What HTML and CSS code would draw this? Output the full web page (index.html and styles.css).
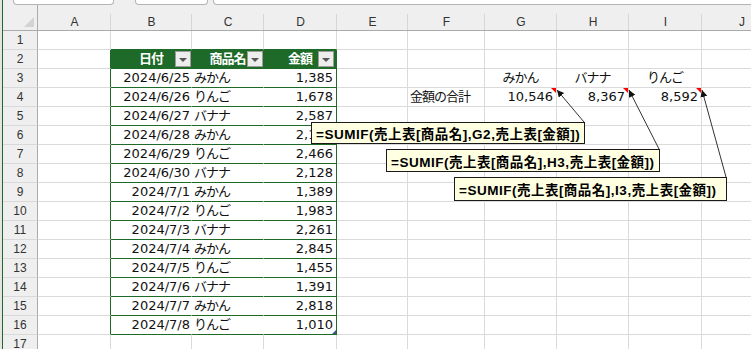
FILE: index.html
```html
<!DOCTYPE html>
<html lang="ja">
<head>
<meta charset="utf-8">
<title>SUMIF</title>
<link rel="stylesheet" href="styles.css">
</head>
<body>
<div class="app">
  <div class="edge"></div>
  <div class="gline"></div>
  <div class="main">
    <div class="tabs">
      <div class="tab tab1"></div>
      <div class="tab tab2"></div>
      <div class="tab tab3"></div>
    </div>
    <div class="sheet">
      <div class="corner"><svg width="10" height="10" viewBox="0 0 10 10"><polygon points="10,0 10,10 0,10" fill="#d3d3d3"/></svg></div>
      <div class="ch">A</div><div class="ch">B</div><div class="ch">C</div><div class="ch">D</div><div class="ch">E</div><div class="ch">F</div><div class="ch">G</div><div class="ch">H</div><div class="ch">I</div><div class="ch">J</div>

      <div class="rh">1</div>
      <div class="c"></div><div class="c tt"></div><div class="c tt"></div><div class="c tt"></div><div class="c"></div><div class="c"></div><div class="c"></div><div class="c"></div><div class="c"></div><div class="c"></div>

      <div class="rh">2</div>
      <div class="c tl"></div>
      <div class="c th"><span class="jp">日付</span><span class="fb"><span class="tri"></span></span></div>
      <div class="c th"><span class="jp">商品名</span><span class="fb"><span class="tri"></span></span></div>
      <div class="c th te"><span class="jp">金額</span><span class="fb fb-d"><span class="tri"></span></span></div>
      <div class="c"></div><div class="c"></div><div class="c"></div><div class="c"></div><div class="c"></div><div class="c"></div>

      <div class="rh">3</div>
      <div class="c tl"></div><div class="c t r">2024/6/25</div><div class="c t jp">みかん</div><div class="c t r te">1,385</div>
      <div class="c"></div><div class="c"></div><div class="c ctr jp">みかん</div><div class="c ctr jp">バナナ</div><div class="c ctr jp">りんご</div><div class="c"></div>

      <div class="rh">4</div>
      <div class="c tl"></div><div class="c t r">2024/6/26</div><div class="c t jp">りんご</div><div class="c t r te">1,678</div>
      <div class="c"></div><div class="c lbl jp">金額の合計</div><div class="c r sum">10,546</div><div class="c r sum">8,367</div><div class="c r sum">8,592</div><div class="c"></div>

      <div class="rh">5</div>
      <div class="c tl"></div><div class="c t r">2024/6/27</div><div class="c t jp">バナナ</div><div class="c t r te">2,587</div>
      <div class="c"></div><div class="c"></div><div class="c"></div><div class="c"></div><div class="c"></div><div class="c"></div>

      <div class="rh">6</div>
      <div class="c tl"></div><div class="c t r">2024/6/28</div><div class="c t jp">みかん</div><div class="c t r te">2,109</div>
      <div class="c"></div><div class="c"></div><div class="c"></div><div class="c"></div><div class="c"></div><div class="c"></div>

      <div class="rh">7</div>
      <div class="c tl"></div><div class="c t r">2024/6/29</div><div class="c t jp">りんご</div><div class="c t r te">2,466</div>
      <div class="c"></div><div class="c"></div><div class="c"></div><div class="c"></div><div class="c"></div><div class="c"></div>

      <div class="rh">8</div>
      <div class="c tl"></div><div class="c t r">2024/6/30</div><div class="c t jp">バナナ</div><div class="c t r te">2,128</div>
      <div class="c"></div><div class="c"></div><div class="c"></div><div class="c"></div><div class="c"></div><div class="c"></div>

      <div class="rh">9</div>
      <div class="c tl"></div><div class="c t r">2024/7/1</div><div class="c t jp">みかん</div><div class="c t r te">1,389</div>
      <div class="c"></div><div class="c"></div><div class="c"></div><div class="c"></div><div class="c"></div><div class="c"></div>

      <div class="rh">10</div>
      <div class="c tl"></div><div class="c t r">2024/7/2</div><div class="c t jp">りんご</div><div class="c t r te">1,983</div>
      <div class="c"></div><div class="c"></div><div class="c"></div><div class="c"></div><div class="c"></div><div class="c"></div>

      <div class="rh">11</div>
      <div class="c tl"></div><div class="c t r">2024/7/3</div><div class="c t jp">バナナ</div><div class="c t r te">2,261</div>
      <div class="c"></div><div class="c"></div><div class="c"></div><div class="c"></div><div class="c"></div><div class="c"></div>

      <div class="rh">12</div>
      <div class="c tl"></div><div class="c t r">2024/7/4</div><div class="c t jp">みかん</div><div class="c t r te">2,845</div>
      <div class="c"></div><div class="c"></div><div class="c"></div><div class="c"></div><div class="c"></div><div class="c"></div>

      <div class="rh">13</div>
      <div class="c tl"></div><div class="c t r">2024/7/5</div><div class="c t jp">りんご</div><div class="c t r te">1,455</div>
      <div class="c"></div><div class="c"></div><div class="c"></div><div class="c"></div><div class="c"></div><div class="c"></div>

      <div class="rh">14</div>
      <div class="c tl"></div><div class="c t r">2024/7/6</div><div class="c t jp">バナナ</div><div class="c t r te">1,391</div>
      <div class="c"></div><div class="c"></div><div class="c"></div><div class="c"></div><div class="c"></div><div class="c"></div>

      <div class="rh">15</div>
      <div class="c tl"></div><div class="c t r">2024/7/7</div><div class="c t jp">みかん</div><div class="c t r te">2,818</div>
      <div class="c"></div><div class="c"></div><div class="c"></div><div class="c"></div><div class="c"></div><div class="c"></div>

      <div class="rh">16</div>
      <div class="c tl"></div><div class="c t r">2024/7/8</div><div class="c t jp">りんご</div><div class="c t r te">1,010</div>
      <div class="c"></div><div class="c"></div><div class="c"></div><div class="c"></div><div class="c"></div><div class="c"></div>

      <div class="rh">17</div>
      <div class="c"></div><div class="c"></div><div class="c"></div><div class="c"></div><div class="c"></div><div class="c"></div><div class="c"></div><div class="c"></div><div class="c"></div><div class="c"></div>
    </div>
  </div>

  <svg class="arrows" width="751" height="349" viewBox="0 0 751 349">
    <defs>
      <marker id="ah" markerUnits="userSpaceOnUse" markerWidth="8" markerHeight="8" refX="7" refY="3.5" orient="auto">
        <path d="M0,0 L7,3.5 L0,7 z" fill="#111"/>
      </marker>
    </defs>
    <polygon points="551,88 556,88 556,93" fill="#ff0000"/>
    <polygon points="623,88 628,88 628,93" fill="#ff0000"/>
    <polygon points="696,88 701,88 701,93" fill="#ff0000"/>
    <line x1="584" y1="122" x2="557" y2="90" stroke="#333" stroke-width="1" marker-end="url(#ah)"/>
    <line x1="659" y1="149" x2="629" y2="90" stroke="#333" stroke-width="1" marker-end="url(#ah)"/>
    <line x1="726" y1="177" x2="702" y2="90" stroke="#333" stroke-width="1" marker-end="url(#ah)"/>
    <polygon points="336,330 336,334 332,334" fill="#3b5a8a"/>
  </svg>

  <div class="cm cm1">=SUMIF(売上表[商品名],G2,売上表[金額])</div>
  <div class="cm cm2">=SUMIF(売上表[商品名],H3,売上表[金額])</div>
  <div class="cm cm3">=SUMIF(売上表[商品名],I3,売上表[金額])</div>
</div>
</body>
</html>
```

FILE: styles.css
```css
html, body {
  margin: 0;
  padding: 0;
  background: #ffffff;
  overflow: hidden;
}

.app {
  position: relative;
  display: flex;
  width: 751px;
  height: 349px;
  overflow: hidden;
}

.edge {
  width: 2px;
  background: #e4e4e4;
  flex: none;
}

.gline {
  width: 1px;
  background: #1e6a28;
  flex: none;
}

.main {
  flex: 1;
  display: flex;
  flex-direction: column;
  min-width: 0;
}

.tabs {
  height: 5px;
  display: flex;
  background: #efefef;
  flex: none;
}

.tab {
  height: 5px;
  box-sizing: border-box;
  background: #ffffff;
  border: 1px solid #b4b4b4;
  border-top: none;
  border-radius: 0 0 4px 4px;
}

.tab1 { margin-left: 10px; width: 101px; }
.tab2 { margin-left: 21px; width: 73px; }
.tab3 { margin-left: 5px; flex: 1; margin-right: -10px; }

.sheet {
  display: grid;
  grid-template-columns: 35px 73px 81px 72px 73px 71px 77px 72px 72px 73px 80px;
  grid-template-rows: 26px;
  grid-auto-rows: 19px;
}

.corner {
  background: #efefef;
  border-right: 1px solid #ababab;
  border-bottom: 1px solid #ababab;
  display: flex;
  justify-content: flex-end;
  align-items: flex-end;
  padding: 0 3px 3px 0;
}

.ch {
  position: relative;
  background: #efefef;
  border-bottom: 1px solid #ababab;
  text-align: center;
  font: 12px/16px "Liberation Sans", "DejaVu Sans", sans-serif;
  color: #333333;
  padding-top: 9px;
}

.ch::after {
  content: "";
  position: absolute;
  right: 0;
  top: 9px;
  bottom: 0;
  width: 1px;
  background: #d6d6d6;
}

.rh {
  background: #efefef;
  border-right: 1px solid #ababab;
  border-bottom: 1px solid #d9d9d9;
  text-align: center;
  font: 12px/18px "Liberation Sans", "DejaVu Sans", sans-serif;
  color: #333333;
}

.c {
  border-right: 1px solid #dadada;
  border-bottom: 1px solid #dadada;
  font: 13px/18px "DejaVu Sans", "Noto Sans CJK JP", sans-serif;
  color: #111111;
  white-space: nowrap;
  padding: 0 2px;
  min-width: 0;
}

.jp { letter-spacing: -1px; }

.r { text-align: right; padding-right: 1px; }
.ctr { text-align: center; }
.lbl { padding-left: 2px; }
.sum { padding-right: 3px; }

.tt { border-bottom-color: #1e6a28; }
.tl { border-right-color: #1e6a28; }

.t {
  border-bottom-color: #1e6a28;
  border-right-color: #ffffff;
}

.t.r { padding-right: 1px; }
.t.te { border-right-color: #1e6a28; padding-right: 3px; }

.th {
  position: relative;
  background: #1e6a28;
  border-bottom-color: #1e6a28;
  border-right-color: #1e6a28;
  color: #ffffff;
  font-weight: bold;
  text-align: center;
  padding: 0;
}

.th.te { padding-right: 0; }

.fb {
  position: absolute;
  right: 0;
  top: 1px;
  width: 16px;
  height: 16px;
  box-sizing: border-box;
  background: #ededed;
  border: 1px solid #9c9c9c;
  display: flex;
  align-items: center;
  justify-content: center;
}

.fb-d { right: 2px; }

.tri {
  width: 0;
  height: 0;
  border-left: 4px solid transparent;
  border-right: 4px solid transparent;
  border-top: 4px solid #555555;
  margin-top: 1px;
}

.arrows {
  position: absolute;
  left: 0;
  top: 0;
  pointer-events: none;
}

.cm {
  position: absolute;
  box-sizing: border-box;
  background: #ffffe1;
  border: 1px solid #1a1a1a;
  font: bold 13.5px "Liberation Sans", "Noto Sans CJK JP", sans-serif;
  letter-spacing: 0.5px;
  color: #000000;
  white-space: nowrap;
  display: flex;
  align-items: center;
  padding-left: 4px;
}

.cm1 { left: 311px; top: 122px; width: 274px; height: 22px; }
.cm2 { left: 386px; top: 149px; width: 274px; height: 23px; }
.cm3 { left: 454px; top: 177px; width: 273px; height: 24px; }
```
